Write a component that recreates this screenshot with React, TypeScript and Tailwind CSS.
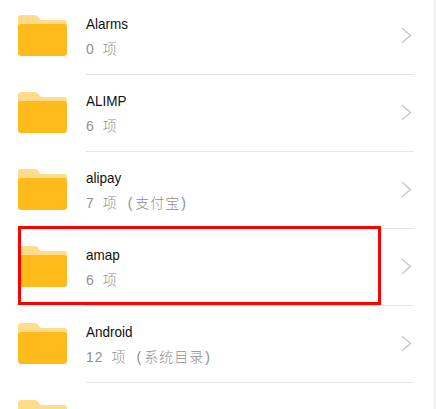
import React from "react";

const rows = [
  { name: "Alarms", count: "0 项", note: [] as string[] },
  { name: "ALIMP", count: "6 项", note: [] as string[] },
  { name: "alipay", count: "7 项", note: ["支付宝"] },
  { name: "amap", count: "6 项", note: [] as string[] },
  { name: "Android", count: "12 项", note: ["系统目录"] },
  { name: "app", count: "", note: [] as string[] },
];

function Folder() {
  return (
    <svg width="49" height="41" viewBox="0 0 49 41" className="-mt-[2px] shrink-0">
      <path d="M3 0H16.500C18 0 19 .6 20 1.700L23 5H46C47.700 5 49 6.300 49 8V20H0V3C0 1.300 1.300 0 3 0Z" fill="#FFDB8C" />
      <path d="M2.500 9H46.500C47.900 9 49 10.100 49 11.500V38C49 39.700 47.700 41 46 41H3C1.300 41 0 39.700 0 38V11.500C0 10.100 1.100 9 2.500 9Z" fill="#FFBB1C" />
    </svg>
  );
}

function Chevron() {
  return (
    <svg width="11" height="17" viewBox="0 0 11 17" className="shrink-0">
      <path d="M1 1.200L9.500 8.500L1 15.800" fill="none" stroke="#C9C9C9" strokeWidth="1.500" />
    </svg>
  );
}

export default function App() {
  return (
    <div className="relative h-[409px] w-[436px] overflow-hidden bg-white font-['Liberation_Sans','Noto_Sans_CJK_SC',sans-serif]">
      <div className="-mt-[2px] mr-[3px]">
        {rows.map((r) => (
          <div key={r.name} className="flex h-[77px] items-center pl-[18px]">
            <Folder />
            <div className="ml-[19px] flex h-full w-[328px] items-center border-b border-[#e5e5e5]">
              <div className="mt-[1px] flex-1">
                <div className="origin-left scale-y-[1.15] text-[13.5px] leading-[20px] text-[#111]">{r.name}</div>
                <div className="mt-[5px] whitespace-nowrap text-[14px] font-light leading-[20px] tracking-[1px] text-[#8f8f8f] [word-spacing:3px]">
                  {r.count}
                  {r.note.length > 0 && (
                    <>
                      <span className="ml-[10px] mr-[2px]">(</span>
                      {r.note[0]}
                      <span className="ml-[1px]">)</span>
                    </>
                  )}
                </div>
              </div>
              <div className="-mt-[2px] mr-[2px]"><Chevron /></div>
            </div>
          </div>
        ))}
      </div>
      <div className="absolute right-0 top-0 h-full w-[3px] bg-[#f3f3f3]" />
      <div className="absolute left-[18px] top-[226px] h-[79px] w-[363px] border-[3px] border-[#ff0000]" />
    </div>
  );
}
